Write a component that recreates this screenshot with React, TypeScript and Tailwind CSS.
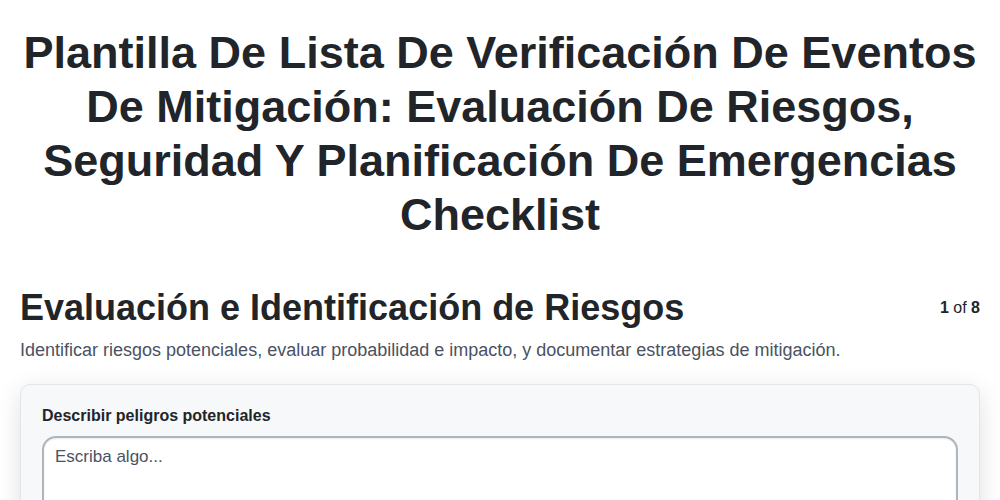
export default function App() {
  return (
    <div className="min-h-screen bg-white font-['Liberation_Sans',Arial,sans-serif] text-[#212529]">
      <div className="px-5 pt-[26px]">
        <h1 className="text-center text-[45px] font-bold leading-[54px] text-[#212529]">
          Plantilla De Lista De Verificación De Eventos De Mitigación: Evaluación De Riesgos, Seguridad Y Planificación De Emergencias Checklist
        </h1>

        <div className="mt-[44px] flex items-start justify-between">
          <h2 className="text-[36px] font-bold leading-[43px]">Evaluación e Identificación de Riesgos</h2>
          <div className="pt-[10px] text-base leading-6">
            <span className="font-bold">1</span> of <span className="font-bold">8</span>
          </div>
        </div>
        <p className="mt-[8px] text-[18px] leading-[27px] text-[#4a5262]">
          Identificar riesgos potenciales, evaluar probabilidad e impacto, y documentar estrategias de mitigación.
        </p>

        <div className="mt-[20px] rounded-[10px] border border-[#e3e5ea] bg-[#f7f8fa] px-[21px] pt-[19px] pb-6 shadow-[0_6px_24px_rgba(0,0,0,0.12)]">
          <label className="block text-base font-bold leading-6 text-[#212529]">Describir peligros potenciales</label>
          <textarea
            className="mt-[8px] block h-[120px] w-full resize-none rounded-[14px] border-2 border-[#adb5bd] bg-white px-[11px] py-[7px] text-[17px] leading-6 text-[#212529] shadow-[inset_0_1px_2px_rgba(0,0,0,0.08)] placeholder:text-[#4a5262] outline-none"
            placeholder="Escriba algo..."
          />
        </div>
      </div>
    </div>
  );
}
